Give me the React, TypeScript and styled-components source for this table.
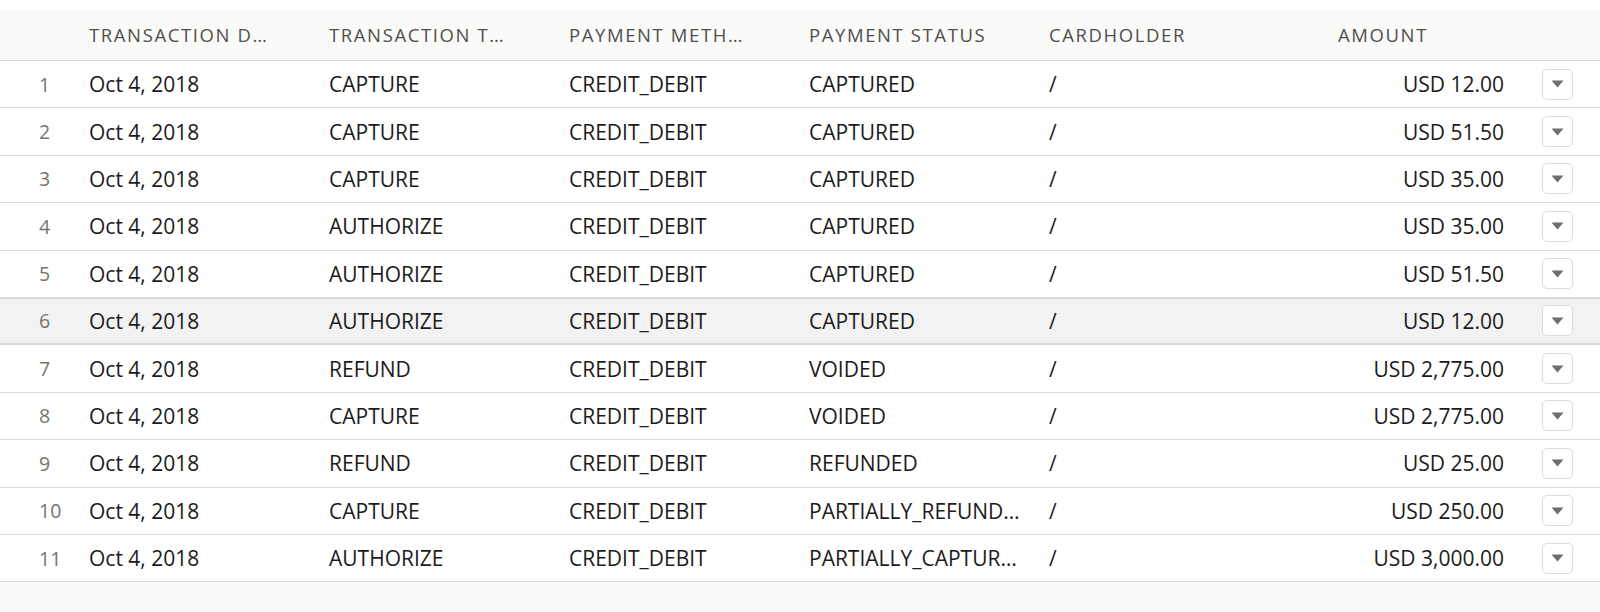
import styled, { createGlobalStyle, css } from "styled-components"

const GlobalStyle = createGlobalStyle`
  html, body {
    margin: 0;
    padding: 0;
    background: #ffffff;
  }
  body {
    font-family: "Open Sans", "Liberation Sans", sans-serif;
    color: #080707;
  }
`

const columns = "81px 240px 240px 240px 240px 289px 182px 1fr"

const Wrapper = styled.div`
  margin-top: 10px;
  height: 602px;
  background: #fafaf9;
  overflow: hidden;
`

const HeaderRow = styled.div`
  display: grid;
  grid-template-columns: ${columns};
  height: 51px;
  box-sizing: border-box;
  border-bottom: 1px solid #dddbda;
  background: #fafaf9;
`

const HeaderCell = styled.div`
  display: flex;
  align-items: center;
  min-width: 0;
  padding: 0 48px 2px 8px;
  font-size: 18.5px;
  letter-spacing: 1.6px;
  text-transform: uppercase;
  color: #514f4d;
  span {
    white-space: nowrap;
    overflow: hidden;
    text-overflow: ellipsis;
  }
`

const Body = styled.div`
  background: #ffffff;
`

const Row = styled.div<{ $active?: boolean }>`
  display: grid;
  grid-template-columns: ${columns};
  height: 47.4px;
  box-sizing: border-box;
  border-bottom: 1px solid #dddbda;
  background: #ffffff;
  ${(p) =>
    p.$active &&
    css`
      background: #f3f2f2;
      border-bottom: 2px solid #d8d6d5;
      box-shadow: inset 0 1px 0 #d8d6d5;
    `}
`

const Cell = styled.div<{ $right?: boolean }>`
  display: flex;
  align-items: center;
  justify-content: ${(p) => (p.$right ? "flex-end" : "flex-start")};
  min-width: 0;
  padding: 0 ${(p) => (p.$right ? "8px" : "18px")} 0 8px;
  font-size: 21px;
  color: #1c1b1b;
  span {
    white-space: nowrap;
    overflow: hidden;
    text-overflow: ellipsis;
  }
`

const NumberCell = styled(Cell)`
  padding-left: 39px;
  padding-right: 0;
  color: #767471;
  font-size: 19.5px;
`

const ActionCell = styled.div`
  display: flex;
  align-items: center;
  padding-left: 30px;
`

const MenuButton = styled.button`
  display: flex;
  align-items: center;
  justify-content: center;
  width: 31px;
  height: 31px;
  padding: 0;
  border: 1px solid #dddbda;
  border-radius: 5px;
  background: #ffffff;
  cursor: pointer;
`

type Txn = {
  type: string
  status: string
  amount: string
}

const rows: Txn[] = [
  { type: "CAPTURE", status: "CAPTURED", amount: "USD 12.00" },
  { type: "CAPTURE", status: "CAPTURED", amount: "USD 51.50" },
  { type: "CAPTURE", status: "CAPTURED", amount: "USD 35.00" },
  { type: "AUTHORIZE", status: "CAPTURED", amount: "USD 35.00" },
  { type: "AUTHORIZE", status: "CAPTURED", amount: "USD 51.50" },
  { type: "AUTHORIZE", status: "CAPTURED", amount: "USD 12.00" },
  { type: "REFUND", status: "VOIDED", amount: "USD 2,775.00" },
  { type: "CAPTURE", status: "VOIDED", amount: "USD 2,775.00" },
  { type: "REFUND", status: "REFUNDED", amount: "USD 25.00" },
  { type: "CAPTURE", status: "PARTIALLY_REFUNDED", amount: "USD 250.00" },
  { type: "AUTHORIZE", status: "PARTIALLY_CAPTURED", amount: "USD 3,000.00" },
]

const headers = [
  "Transaction Date",
  "Transaction Type",
  "Payment Method",
  "Payment Status",
  "Cardholder",
  "Amount",
]

function DownIcon() {
  return (
    <svg width="13" height="8" viewBox="0 0 13 8">
      <path d="M0.5 0.5 H12.5 L6.5 7.5 Z" fill="#706e6b" />
    </svg>
  )
}

export default function App() {
  return (
    <>
      <GlobalStyle />
      <Wrapper>
        <HeaderRow>
          <HeaderCell />
          {headers.map((h) => (
            <HeaderCell key={h}>
              <span>{h}</span>
            </HeaderCell>
          ))}
          <HeaderCell />
        </HeaderRow>
        <Body>
          {rows.map((r, i) => (
            <Row key={i} $active={i === 5}>
              <NumberCell>{i + 1}</NumberCell>
              <Cell>
                <span>Oct 4, 2018</span>
              </Cell>
              <Cell>
                <span>{r.type}</span>
              </Cell>
              <Cell>
                <span>CREDIT_DEBIT</span>
              </Cell>
              <Cell>
                <span>{r.status}</span>
              </Cell>
              <Cell>
                <span>/</span>
              </Cell>
              <Cell $right>
                <span>{r.amount}</span>
              </Cell>
              <ActionCell>
                <MenuButton aria-label="Show actions">
                  <DownIcon />
                </MenuButton>
              </ActionCell>
            </Row>
          ))}
        </Body>
      </Wrapper>
    </>
  )
}
